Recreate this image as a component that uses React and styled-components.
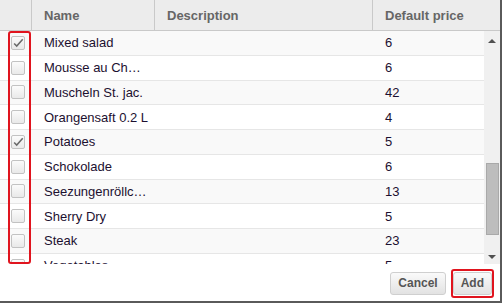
import React from 'react';
import styled, { createGlobalStyle } from 'styled-components';

const GlobalStyle = createGlobalStyle`
  html, body {
    margin: 0;
    padding: 0;
    background: #ffffff;
  }
  body {
    font-family: "Liberation Sans", Arial, sans-serif;
  }
`;

const items = [
  { name: 'Mixed salad', price: '6', checked: true },
  { name: 'Mousse au Ch…', price: '6' },
  { name: 'Muscheln St. jac.', price: '42' },
  { name: 'Orangensaft 0.2 L', price: '4' },
  { name: 'Potatoes', price: '5', checked: true },
  { name: 'Schokolade', price: '6' },
  { name: 'Seezungenröllc…', price: '13' },
  { name: 'Sherry Dry', price: '5' },
  { name: 'Steak', price: '23' },
  { name: 'Vegetables', price: '5', checked: true },
];

const Dialog = styled.div`
  position: relative;
  width: 500px;
  height: 301px;
  border-left: 1px solid #d4d4d4;
  border-right: 2px solid #5a5a5a;
  border-bottom: 2px solid #5a5a5a;
  box-sizing: content-box;
  margin-left: -1px;
  display: flex;
  flex-direction: column;
  background: #fff;
  overflow: hidden;
`;

const HeaderRow = styled.div`
  display: grid;
  grid-template-columns: 32px 123px 218px 1fr;
  height: 30px;
  background: #ececec;
  border-bottom: 1px solid #c9c9c9;
  flex-shrink: 0;
`;

const HeaderCell = styled.div`
  display: flex;
  align-items: center;
  padding-left: 12px;
  font-size: 13px;
  font-weight: bold;
  color: #666;
  border-left: ${(p) => (p.$first ? 'none' : '1px solid #c9c9c9')};
  margin-left: ${(p) => (p.$first ? '0' : '-1px')};
`;

const Body = styled.div`
  display: flex;
  height: 233px;
  flex-shrink: 0;
`;

const Rows = styled.div`
  flex: 1;
  overflow: hidden;
`;

const Row = styled.div`
  display: grid;
  grid-template-columns: 32px 123px 218px 1fr;
  height: 23.75px;
  border-bottom: 1px solid #e6e6e6;
  background: ${(p) => (p.$odd ? '#f9f9f9' : '#ffffff')};
`;

const Cell = styled.div`
  display: flex;
  align-items: center;
  padding-left: 12px;
  font-size: 13px;
  color: #1c1030;
  white-space: nowrap;
  overflow: hidden;
`;

const CheckCell = styled.div`
  display: flex;
  align-items: center;
  padding-left: 11px;
`;

const Box = styled.div`
  width: 14px;
  height: 14px;
  box-sizing: border-box;
  border: 1px solid #c2c2c2;
  border-radius: 2px;
  background: linear-gradient(#fbfbfb, #e9e9e9);
  display: flex;
  align-items: center;
  justify-content: center;
`;

const ScrollBar = styled.div`
  width: 16px;
  background: #f0f0f0;
  display: flex;
  flex-direction: column;
  align-items: center;
  flex-shrink: 0;
`;

const Arrow = styled.div`
  width: 0;
  height: 0;
  border-left: 4px solid transparent;
  border-right: 4px solid transparent;
  ${(p) =>
    p.$down
      ? 'border-top: 4px solid #505050; margin-top: 19px;'
      : 'border-bottom: 4px solid #505050; margin-top: 8px;'}
`;

const Track = styled.div`
  flex: 1;
  width: 13px;
  display: flex;
  flex-direction: column;
  padding-top: 120px;
  box-sizing: border-box;
`;

const Thumb = styled.div`
  height: 72px;
  background: #bdbdbd;
  border: 1px solid #a9a9a9;
  box-sizing: border-box;
`;

const ScrollFoot = styled.div`
  height: 5px;
`;

const Footer = styled.div`
  flex: 1;
  display: flex;
  justify-content: flex-end;
  align-items: center;
  gap: 5px;
  padding-right: 6px;
  padding-top: 1px;
`;

const Button = styled.button`
  height: 23px;
  padding: 0 ${(p) => p.$pad || 8}px;
  font-family: "Liberation Sans", Arial, sans-serif;
  font-size: 12px;
  font-weight: bold;
  color: #555;
  border: 1px solid #cfcfcf;
  border-radius: 3px;
  background: linear-gradient(#fafafa, #e2e2e2);
  cursor: pointer;
`;

const Highlight = styled.div`
  border: 2px solid #e0141e;
  border-radius: 3px;
  padding: 1px 0;
  display: flex;
`;

const ColumnMark = styled.div`
  position: absolute;
  left: 8px;
  top: 31px;
  width: 23px;
  height: 233px;
  box-sizing: border-box;
  border: 2px solid #e0141e;
  border-radius: 3px;
  pointer-events: none;
`;

const Check = () => (
  <svg width="14" height="14" viewBox="0 0 14 14">
    <path d="M2.5 7.5 L5.5 10.5 L12.5 2.5" fill="none" stroke="#6a6a6a" strokeWidth="1.8" />
  </svg>
);

const App = () => {
  return (
    <>
      <GlobalStyle />
      <Dialog>
        <HeaderRow>
          <HeaderCell $first />
          <HeaderCell>Name</HeaderCell>
          <HeaderCell>Description</HeaderCell>
          <HeaderCell>Default price</HeaderCell>
        </HeaderRow>
        <Body>
          <Rows>
            {items.map((item, i) => (
              <Row key={item.name} $odd={i % 2 === 0}>
                <CheckCell>
                  <Box>{item.checked && <Check />}</Box>
                </CheckCell>
                <Cell>{item.name}</Cell>
                <Cell />
                <Cell>{item.price}</Cell>
              </Row>
            ))}
          </Rows>
          <ScrollBar>
            <Arrow />
            <Track>
              <Thumb />
            </Track>
            <Arrow $down />
            <ScrollFoot />
          </ScrollBar>
        </Body>
        <Footer>
          <Button $pad={7}>Cancel</Button>
          <Highlight>
            <Button $pad={7}>Add</Button>
          </Highlight>
        </Footer>
        <ColumnMark />
      </Dialog>
    </>
  );
};

export default App;
